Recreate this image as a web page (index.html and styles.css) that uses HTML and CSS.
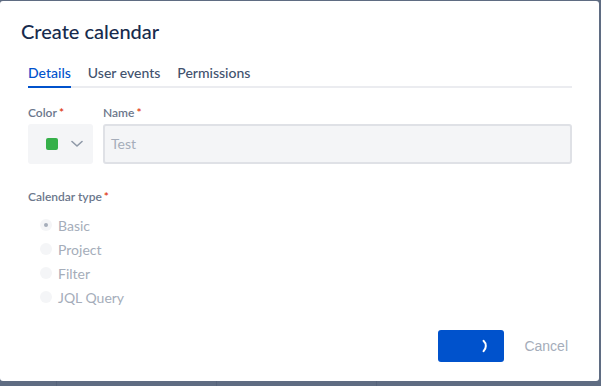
FILE: index.html
```html
<!DOCTYPE html>
<html>
<head>
<meta charset="utf-8">
<link rel="stylesheet" href="styles.css">
</head>
<body>
<div class="page">
  <div class="backdrop-lines">
    <span></span><span></span><span></span>
  </div>
  <div class="dialog">
    <h1 class="title">Create calendar</h1>
    <div class="content">
      <nav class="tabs">
        <span class="tab active">Details</span>
        <span class="tab">User events</span>
        <span class="tab">Permissions</span>
      </nav>
      <div class="row">
        <div class="field color-field">
          <label class="label">Color<span class="req">*</span></label>
          <div class="color-select">
            <span class="swatch"></span>
            <svg class="chev" width="12" height="8" viewBox="0 0 12 8"><path d="M1 1.5 L6 6 L11 1.5" fill="none" stroke="#8f99a8" stroke-width="1.6" stroke-linecap="round" stroke-linejoin="round"/></svg>
          </div>
        </div>
        <div class="field name-field">
          <label class="label">Name<span class="req">*</span></label>
          <div class="text-input">Test</div>
        </div>
      </div>
      <div class="field type-field">
        <label class="label">Calendar type<span class="req">*</span></label>
        <ul class="radios">
          <li class="radio"><span class="dot checked"></span>Basic</li>
          <li class="radio"><span class="dot"></span>Project</li>
          <li class="radio"><span class="dot"></span>Filter</li>
          <li class="radio"><span class="dot"></span>JQL Query</li>
        </ul>
      </div>
    </div>
    <div class="footer">
      <button class="btn-primary">
        <svg width="20" height="20" viewBox="0 0 20 20"><path d="M14.5 4.8 A7 7 0 0 1 14.5 15.2" fill="none" stroke="#ffffff" stroke-width="2" stroke-linecap="round"/></svg>
      </button>
      <span class="btn-cancel">Cancel</span>
    </div>
  </div>
</div>
</body>
</html>
```
FILE: styles.css
```css
* { box-sizing: border-box; }
html, body { margin: 0; padding: 0; }
body {
  background: #5f6c82;
  font-family: "Lato", "Noto Sans", sans-serif;
  width: 601px;
  height: 386px;
  overflow: hidden;
}
.page {
  position: relative;
  width: 601px;
  height: 386px;
  padding-top: 1px;
}
.backdrop-lines {
  position: absolute;
  left: 0; right: 0; bottom: 0;
  height: 6px;
}
.backdrop-lines span {
  position: absolute;
  bottom: 0;
  width: 1px;
  height: 6px;
  background: #56637a;
}
.backdrop-lines span:nth-child(1) { left: 56px; }
.backdrop-lines span:nth-child(2) { left: 216px; }
.backdrop-lines span:nth-child(3) { left: 376px; }
.dialog {
  position: relative;
  width: 599px;
  height: 380px;
  background: #ffffff;
  border-radius: 3px;
  display: flex;
  flex-direction: column;
}
.title {
  margin: 0;
  padding: 18px 0 0 21px;
  font-size: 20px;
  line-height: 24px;
  font-weight: 500;
  color: #172b4d;
}
.content {
  padding: 0 27px 0 28px;
}
.tabs {
  margin-top: 20px;
  display: flex;
  gap: 17px;
  border-bottom: 2px solid #ebecf0;
  height: 25px;
}
.tab {
  font-size: 14px;
  line-height: 20px;
  font-weight: 500;
  color: #42526e;
  height: 23px;
}
.tab.active {
  color: #0052cc;
  box-shadow: inset 0 -2px 0 #0052cc;
  height: 25px;
  margin-bottom: -2px;
}
.row {
  display: flex;
  gap: 10px;
  margin-top: 17px;
}
.field { display: flex; flex-direction: column; }
.label {
  font-size: 12px;
  line-height: 16px;
  font-weight: 600;
  color: #6b778c;
  margin-bottom: 3px;
}
.req { color: #de350b; margin-left: 2px; }
.color-field { width: 65px; }
.color-select {
  height: 40px;
  background: #f4f5f7;
  border-radius: 3px;
  display: flex;
  align-items: center;
  padding-left: 18px;
  gap: 13px;
}
.swatch {
  width: 12px; height: 12px;
  border-radius: 2px;
  background: #36b04a;
}
.name-field { flex: 1; }
.text-input {
  height: 40px;
  background: #f4f5f7;
  border: 2px solid #dfe1e6;
  border-radius: 3px;
  padding: 0 6px;
  font-size: 14px;
  line-height: 36px;
  color: #a5adba;
}
.type-field { margin-top: 25px; }
.radios {
  list-style: none;
  margin: 5px 0 0 0;
  padding: 0 0 0 12px;
}
.radio {
  display: flex;
  align-items: center;
  height: 24px;
  font-size: 14px;
  color: #a5adba;
  gap: 6px;
}
.dot {
  width: 12px; height: 12px;
  border-radius: 50%;
  background: #f4f5f7;
  display: flex;
  align-items: center;
  justify-content: center;
}
.dot.checked::after {
  content: "";
  width: 4px; height: 4px;
  border-radius: 50%;
  background: #a5adba;
}
.footer {
  margin-top: auto;
  display: flex;
  justify-content: flex-end;
  align-items: center;
  padding: 0 31px 19px 0;
  gap: 20px;
}
.btn-primary {
  width: 66px;
  height: 32px;
  background: #0052cc;
  border: none;
  border-radius: 3px;
  padding: 0 0 0 16px;
  display: flex;
  align-items: center;
  justify-content: center;
}
.btn-cancel {
  font-family: "Liberation Sans", Arial, sans-serif;
  font-size: 14px;
  color: #a5adba;
}
```
